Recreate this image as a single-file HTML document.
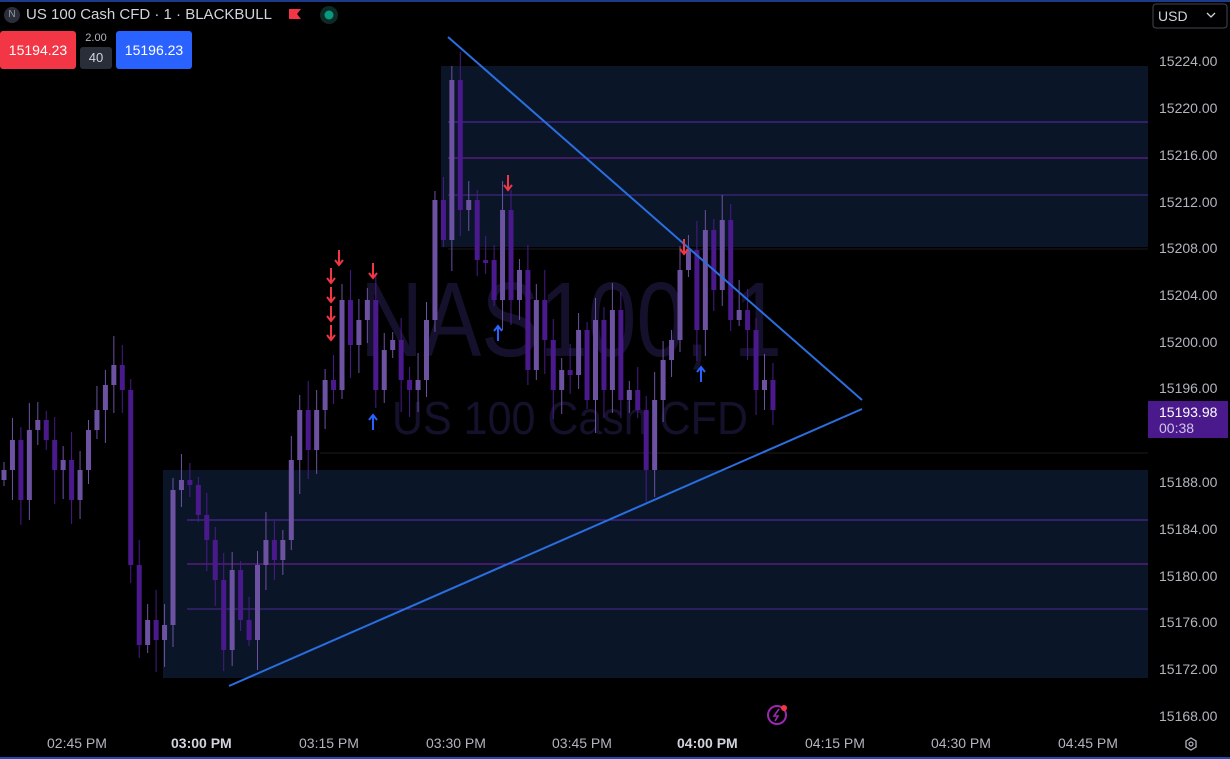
<!DOCTYPE html>
<html><head><meta charset="utf-8"><style>
html,body{margin:0;padding:0;background:#000;width:1230px;height:759px;overflow:hidden;font-family:"Liberation Sans",sans-serif}
svg{position:absolute;left:0;top:0}
.hdr{position:absolute;left:4px;top:6px;color:#d1d4dc;font-size:15px;display:flex;align-items:center}
.n{width:16px;height:16px;border-radius:50%;background:#2a2e39;color:#9598a1;font-size:10px;text-align:center;line-height:16px;margin-right:6px}
.btn{position:absolute;top:31px;height:38px;border-radius:3px;color:#fff;font-size:14px;line-height:38px;text-align:center}
</style></head><body>
<svg id="s" width="1230" height="759" xmlns="http://www.w3.org/2000/svg">
<rect x="0" y="0" width="1230" height="2" fill="#1e3a8a"/>
<rect x="0" y="757" width="1230" height="2" fill="#1e4bb0"/>
<rect x="441" y="66" width="707" height="181" fill="#0a1628"/>
<rect x="163" y="470" width="985" height="208" fill="#0a1628"/>
<line x1="448" y1="122" x2="1148" y2="122" stroke="#5b2bb0" stroke-width="1"/>
<line x1="448" y1="158" x2="1148" y2="158" stroke="#7a1fa8" stroke-width="1"/>
<line x1="448" y1="195" x2="1148" y2="195" stroke="#4a2a90" stroke-width="1"/>
<line x1="448" y1="249" x2="1148" y2="249" stroke="#1c1c22" stroke-width="1"/>
<line x1="320" y1="453" x2="1148" y2="453" stroke="#1c1c22" stroke-width="1"/>
<line x1="187" y1="520" x2="1148" y2="520" stroke="#5b2bb0" stroke-width="1"/>
<line x1="187" y1="564" x2="1148" y2="564" stroke="#7a1fa8" stroke-width="1"/>
<line x1="187" y1="609" x2="1148" y2="609" stroke="#4a2a90" stroke-width="1"/>
<text x="360" y="356" font-size="106" fill="#15112c" font-family="Liberation Sans" textLength="422" lengthAdjust="spacingAndGlyphs">NAS100, 1</text>
<text x="392" y="434" font-size="46" fill="#15112c" font-family="Liberation Sans" textLength="356" lengthAdjust="spacingAndGlyphs">US 100 Cash CFD</text>
<g id="c"></g>
<line x1="448" y1="37" x2="862" y2="400" stroke="#2a6ee0" stroke-width="2"/>
<line x1="229" y1="686" x2="862" y2="409" stroke="#2a6ee0" stroke-width="2"/>
<g id="ar"></g>
<circle cx="777" cy="715" r="9" fill="none" stroke="#9c27b0" stroke-width="2"/>
<path d="M779 709 L774 716 L778 716 L775 721" stroke="#9c27b0" stroke-width="1.6" fill="none"/>
<circle cx="784" cy="708" r="3" fill="#f23645"/>
<g font-size="14" fill="#b2b5be">
<text x="1159" y="66">15224.00</text><text x="1159" y="113">15220.00</text><text x="1159" y="160">15216.00</text><text x="1159" y="207">15212.00</text><text x="1159" y="253">15208.00</text><text x="1159" y="300">15204.00</text><text x="1159" y="347">15200.00</text><text x="1159" y="393">15196.00</text><text x="1159" y="487">15188.00</text><text x="1159" y="534">15184.00</text><text x="1159" y="581">15180.00</text><text x="1159" y="627">15176.00</text><text x="1159" y="674">15172.00</text><text x="1159" y="721">15168.00</text>
<text x="47" y="748">02:45 PM</text><text x="299" y="748">03:15 PM</text><text x="426" y="748">03:30 PM</text><text x="552" y="748">03:45 PM</text><text x="805" y="748">04:15 PM</text><text x="931" y="748">04:30 PM</text><text x="1058" y="748">04:45 PM</text>
</g>
<g font-size="14" fill="#d1d4dc" font-weight="bold"><text x="171" y="748">03:00 PM</text><text x="677" y="748">04:00 PM</text></g>
<rect x="1148" y="401" width="80" height="37" fill="#4a1a8c"/>
<text x="1159" y="417" font-size="14" fill="#fff">15193.98</text>
<text x="1159" y="433" font-size="14" fill="#d1c4e9">00:38</text>
<path d="M1191 738 l5 3 v6 l-5 3 l-5 -3 v-6z" fill="none" stroke="#b2b5be" stroke-width="1.3"/>
<circle cx="1191" cy="744" r="2" fill="none" stroke="#b2b5be" stroke-width="1.2"/>
<rect x="1153" y="4" width="74" height="24" rx="3" fill="none" stroke="#434651"/>
<text x="1158" y="21" font-size="14" fill="#d1d4dc">USD</text>
<path d="M1207 13 l4 4 l4 -4" stroke="#d1d4dc" fill="none" stroke-width="1.3"/>
<path d="M289 9 h12 l-4 5 l4 5 h-12z" fill="#f23645"/>
<circle cx="329" cy="15" r="9" fill="#0d2a24"/><circle cx="329" cy="15" r="4.5" fill="#089981"/>
</svg>
<div class="hdr"><div class="n">N</div>US 100 Cash CFD · 1 · BLACKBULL</div>
<div class="btn" style="left:0;width:76px;background:#f23645">15194.23</div>
<div style="position:absolute;left:80px;top:32px;width:32px;text-align:center;color:#b2b5be;font-size:11px">2.00</div>
<div class="btn" style="left:80px;top:47px;height:22px;line-height:22px;width:32px;background:#2a2e39;font-size:13px;color:#d1d4dc">40</div>
<div class="btn" style="left:116px;width:76px;background:#2962ff">15196.23</div>
<script>
var C=[470,440,500,430,420,440,470,460,500,470,430,410,385,365,390,565,645,620,640,625,490,480,485,515,540,580,650,570,620,640,565,540,560,540,460,410,450,410,380,390,300,345,320,300,390,350,340,380,390,380,320,200,240,80,210,200,260,260,300,210,300,270,370,300,340,390,370,375,330,400,320,390,310,400,390,410,470,400,360,340,270,250,330,230,290,220,320,310,330,390,380,410];
var g=document.getElementById('c'),h='',prev=480;
for(var i=0;i<C.length;i++){var x=4+i*8.45,o=prev,c=C[i];var up=c<o;var col=up?'#6c52a0':'#4a1a8c';
var t=Math.min(o,c),b=Math.max(o,c);if(b-t<3)b=t+3;var hi=t-(8+(i*37%23)),lo=b+(6+(i*53%29));
h+='<line x1="'+x+'" y1="'+hi+'" x2="'+x+'" y2="'+lo+'" stroke="'+col+'" stroke-width="1"/><rect x="'+(x-2.5)+'" y="'+t+'" width="5" height="'+(b-t)+'" fill="'+col+'"/>';prev=c;}
g.innerHTML=h;
function dn(x,y){return '<path d="M'+x+' '+(y-8)+' V'+(y+6)+' M'+(x-4)+' '+(y+2)+' L'+x+' '+(y+7)+' L'+(x+4)+' '+(y+2)+'" stroke="#f23645" stroke-width="2" fill="none"/>';}
function upa(x,y){return '<path d="M'+x+' '+(y+8)+' V'+(y-6)+' M'+(x-4)+' '+(y-2)+' L'+x+' '+(y-7)+' L'+(x+4)+' '+(y-2)+'" stroke="#2962ff" stroke-width="2" fill="none"/>';}
document.getElementById('ar').innerHTML=dn(339,258)+dn(331,276)+dn(331,295)+dn(331,314)+dn(331,333)+dn(373,271)+dn(508,183)+dn(684,247)+upa(373,422)+upa(498,333)+upa(701,374);
</script>
</body></html>
